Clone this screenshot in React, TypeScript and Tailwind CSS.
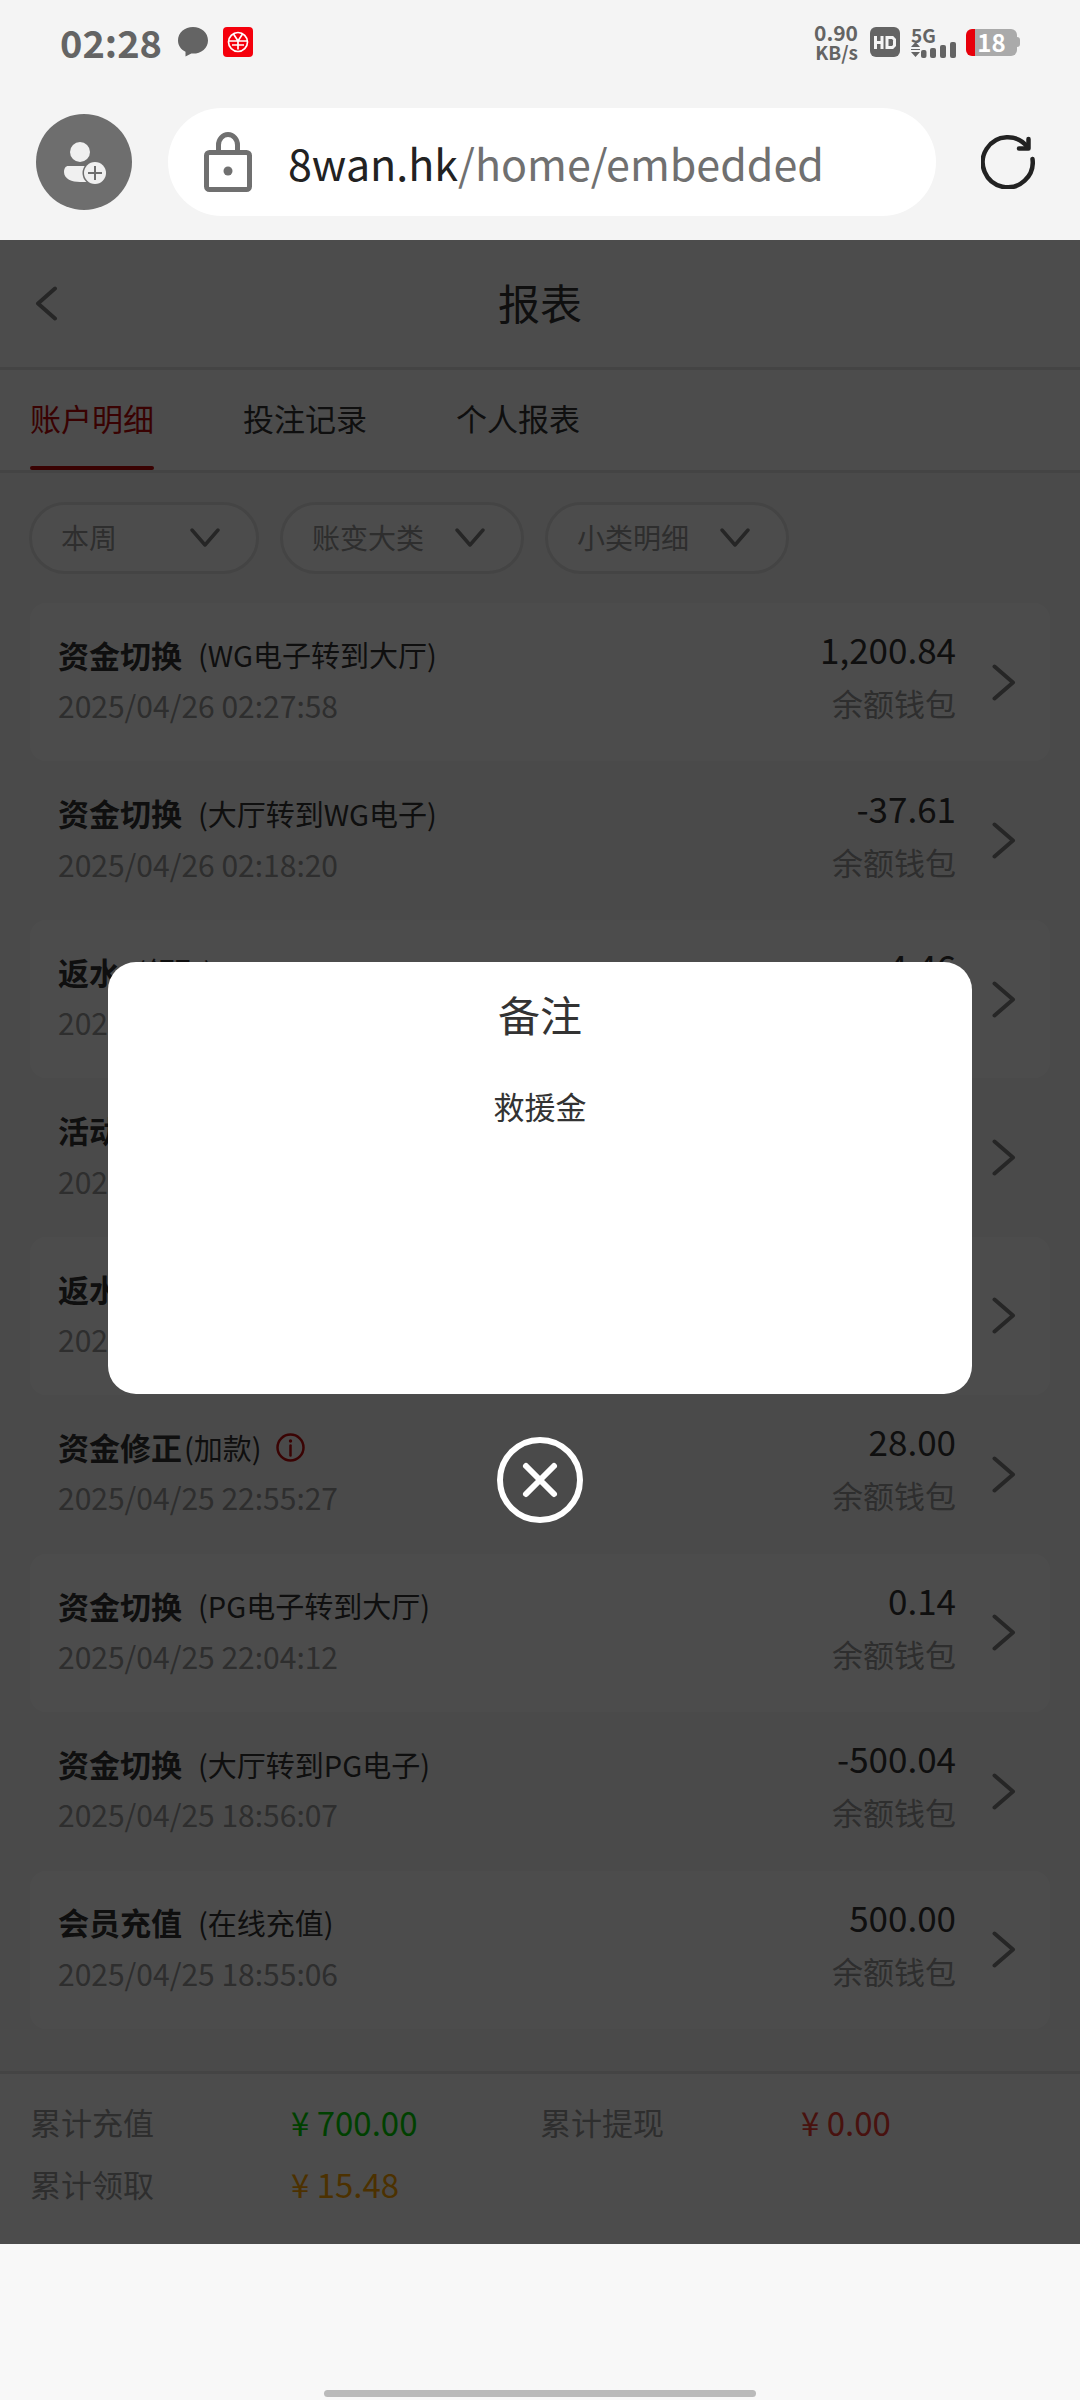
import React, { useState } from 'react';

interface LedgerRow {
  title: string;
  note: string;
  time: string;
  amount: string;
  tight?: boolean;
  info?: boolean;
}

const rows: LedgerRow[] = [
  { title: '资金切换', note: '(WG电子转到大厅)', time: '2025/04/26 02:27:58', amount: '1,200.84' },
  { title: '资金切换', note: '(大厅转到WG电子)', time: '2025/04/26 02:18:20', amount: '-37.61' },
  { title: '返水', note: '(领取)', time: '2025/04/26 02:17:46', amount: '4.46' },
  { title: '活动', note: '(领取)', time: '2025/04/26 02:17:40', amount: '8.00' },
  { title: '返水', note: '(领取)', time: '2025/04/25 23:02:11', amount: '3.02' },
  { title: '资金修正', note: '(加款)', time: '2025/04/25 22:55:27', amount: '28.00', tight: true, info: true },
  { title: '资金切换', note: '(PG电子转到大厅)', time: '2025/04/25 22:04:12', amount: '0.14' },
  { title: '资金切换', note: '(大厅转到PG电子)', time: '2025/04/25 18:56:07', amount: '-500.04' },
  { title: '会员充值', note: '(在线充值)', time: '2025/04/25 18:55:06', amount: '500.00' },
];

const tabs = ['账户明细', '投注记录', '个人报表'];

const filters = [
  { id: 'range', label: '时间', value: '本周', width: 'w-[230px]' },
  { id: 'group', label: '大类', value: '账变大类', width: 'w-[244px]' },
  { id: 'detail', label: '小类', value: '小类明细', width: 'w-[244px]' },
];

const totals = [
  { label: '累计充值', value: '¥ 700.00', color: 'text-[#00d800]' },
  { label: '累计提现', value: '¥ 0.00', color: 'text-[#f03c32]' },
  { label: '累计领取', value: '¥ 15.48', color: 'text-[#ffa500]' },
];

const StatusBar: React.FC = () => (
  <div className="flex h-21 items-center justify-between pr-15 pl-15 text-[#646464]">
    <div className="flex items-center">
      <span className="text-[38px] leading-none font-semibold">02:28</span>
      <svg className="ml-4 h-[30px] w-[30px]" viewBox="0 0 30 30" fill="currentColor">
        <path d="M15 0C6.7 0 0 5.8 0 13.4c0 4.900 2.700 8.800 7.500 11.300L7.500 29.500l5.800-3c.6.1 1.100.1 1.700.1 8.300 0 15-5.600 15-13.200S23.300 0 15 0z" />
      </svg>
      <svg className="ml-[15px] h-[30px] w-[30px]" viewBox="0 0 30 30" fill="none" stroke="#fff" strokeWidth="1.700">
        <rect width="30" height="30" rx="4" fill="#f5000c" stroke="none" />
        <circle cx="15" cy="15" r="9.500" />
        <path d="M10.500 7l4.500 7 4.500-7M5.500 14h19M9 18h12M15 14v8.500" />
      </svg>
    </div>
    <div className="flex items-center">
      <div className="flex flex-col items-end font-semibold">
        <span className="text-[21px] leading-5">0.90</span>
        <span className="text-[19px] leading-5">KB/s</span>
      </div>
      <svg className="ml-3 h-[30px] w-[30px]" viewBox="0 0 30 30" fill="none">
        <rect width="30" height="30" rx="6" fill="currentColor" />
        <path d="M5.500 9v13M12 9v13M5.500 15.500H12M17 10.500h5.500l2 2v6l-2 2H17z" stroke="#f5f5f5" strokeWidth="3" />
      </svg>
      <div className="ml-[11px] flex flex-col">
        <span className="text-[19px] leading-[15px] font-bold">5G</span>
        <svg className="h-[16px] w-[45px]" viewBox="0 0 45 16" fill="currentColor">
          <path d="M4.500 0L9 5H0zM4.500 15L0 10h9zM0 7h9v1H0z" />
          <rect x="10" y="8" width="5.500" height="8" rx="2" />
          <rect x="19" y="6" width="6" height="10" rx="2" />
          <rect x="29" y="3" width="6" height="13" rx="2" />
          <rect x="39" y="0" width="6" height="16" rx="2" />
        </svg>
      </div>
      <div className="ml-[10px] flex items-center">
        <div className="flex h-[27px] w-[51px] items-center justify-center rounded-md bg-gradient-to-r from-red-600 from-18% to-[#aaaaaa] to-18% text-[24px] leading-none font-bold text-white">
          18
        </div>
        <div className="h-[10px] w-[3px] rounded-r-sm bg-[#aaaaaa]" />
      </div>
    </div>
  </div>
);

const AddressBar: React.FC = () => (
  <div className="flex items-center pt-6 pr-[45px] pb-6 pl-9">
    <button type="button" aria-label="账号" className="flex h-24 w-24 items-center justify-center rounded-full bg-[#6e6e6e]">
      <svg className="h-24 w-24" viewBox="0 0 96 96" fill="#f0f0f0">
        <circle cx="44" cy="38" r="10" />
        <path d="M32 52h24v16H44c-8 0-16-3-16-10 0-4 2-6 4-6z" />
        <circle cx="59" cy="59" r="12.500" fill="#6e6e6e" />
        <circle cx="59" cy="59" r="11" />
        <path d="M59 52v14M52 59h14" stroke="#6e6e6e" strokeWidth="2" />
      </svg>
    </button>
    <div className="ml-9 flex h-27 flex-1 items-center rounded-full bg-white pl-9">
      <svg className="h-[60px] w-12" viewBox="0 0 48 60" fill="none" stroke="#707070" strokeWidth="5">
        <rect x="2.500" y="20.500" width="43" height="37" rx="3" />
        <path d="M14.500 20V13a9.500 10.500 0 0 1 19 0v7" />
        <circle cx="24" cy="39" r="4.500" fill="#707070" stroke="none" />
      </svg>
      <a href="#embedded" className="ml-9 text-[43px] leading-none text-[#707070]">
        <span className="text-[#222222]">8wan.hk</span>/home/embedded
      </a>
    </div>
    <button type="button" aria-label="刷新" className="ml-[45px]">
      <svg className="h-[54px] w-[54px]" viewBox="0 0 54 54" fill="none" stroke="#222222" strokeWidth="4.500" strokeLinecap="round" strokeLinejoin="round">
        <path d="M51.500 24a25 25 0 1 1-5-12" />
        <path d="M47.500 4v9.500H38" />
      </svg>
    </button>
  </div>
);

const Row: React.FC<{ row: LedgerRow }> = ({ row }) => (
  <li className="flex flex-1 items-center rounded-2xl pr-[34px] pl-7 text-[#333333] odd:bg-white">
    <div className="flex-1 pb-1">
      <div className="flex h-[50px] items-center">
        <span className="text-[31px] font-bold">{row.title}</span>
        <span className={row.tight ? 'ml-[2px] text-[29px]' : 'ml-4 text-[29px]'}>{row.note}</span>
        {row.info && (
          <svg className="ml-[14px] h-[29px] w-[29px]" viewBox="0 0 29 29" fill="none" stroke="#c20c0c" strokeWidth="2.500">
            <circle cx="14.500" cy="14.500" r="13" />
            <path d="M14.500 12.500v10" strokeLinecap="round" />
            <circle cx="14.500" cy="8" r="1.700" fill="#c20c0c" stroke="none" />
          </svg>
        )}
      </div>
      <div className="text-[30px] leading-[50px] text-[#999999]">{row.time}</div>
    </div>
    <div className="pb-3 text-right">
      <div className="text-[35px] leading-[54px]">{row.amount}</div>
      <div className="text-[31px] leading-[54px] text-[#999999]">余额钱包</div>
    </div>
    <svg className="ml-9 h-[37px] w-6" viewBox="0 0 24 37" fill="none" stroke="#808080" strokeWidth="4" strokeLinecap="round" strokeLinejoin="round">
      <path d="M2.500 2.500L21 18.500 2.500 34.500" />
    </svg>
  </li>
);

export default function App() {
  const [activeTab, setActiveTab] = useState<string>(tabs[0]);
  const [open, setOpen] = useState<boolean>(true);

  return (
    <div className="flex min-h-screen flex-col bg-[#f8f8f8] font-['Noto_Sans_CJK_SC',sans-serif]">
      <header className="bg-[#f4f4f4]">
        <StatusBar />
        <AddressBar />
      </header>

      <div className="relative flex flex-1 flex-col">
        <div className="flex h-[130px] items-center border-b-3 border-[#e3e3e3] bg-white px-[35px]">
          <button type="button" aria-label="返回" className="w-6">
            <svg className="h-[35px] w-[23px]" viewBox="0 0 23 35" fill="none" stroke="#808080" strokeWidth="4" strokeLinecap="round" strokeLinejoin="round">
              <path d="M20 2.500L3 17.500 20 32.500" />
            </svg>
          </button>
          <h1 className="flex-1 pb-1 text-center text-[42px] leading-none text-[#333333]">报表</h1>
          <div className="w-6" />
        </div>

        <nav className="flex h-[103px] gap-[89px] border-b-3 border-[#e3e3e3] bg-white px-[30px]">
          {tabs.map((tab) => (
            <button
              key={tab}
              type="button"
              onClick={() => setActiveTab(tab)}
              className={`flex flex-col text-[31px] ${tab === activeTab ? 'text-[#c00808]' : 'text-[#333333]'}`}
            >
              <span className="flex flex-1 items-center">{tab}</span>
              <span className={`h-1 w-full rounded-full ${tab === activeTab ? 'bg-[#c00808]' : ''}`} />
            </button>
          ))}
        </nav>

        <div className="flex gap-[21px] px-[29px] pt-[29px] pb-[29px]">
          {filters.map((f) => (
            <div key={f.id} className={`relative ${f.width}`}>
              <select
                id={f.id}
                aria-label={f.label}
                className="h-18 w-full appearance-none rounded-full border-3 border-[#e3e3e3] bg-white pb-[2px] pl-[29px] text-[28px] text-[#999999]"
              >
                <option>{f.value}</option>
              </select>
              <svg className="pointer-events-none absolute top-[26px] right-[39px] h-5 w-[30px]" viewBox="0 0 30 20" fill="none" stroke="#808080" strokeWidth="3.500" strokeLinecap="round" strokeLinejoin="round">
                <path d="M2 2l13 15L28 2" />
              </svg>
            </div>
          ))}
        </div>

        <ul className="flex flex-1 flex-col px-[30px] pb-[42px]">
          {rows.map((row) => (
            <Row key={row.time} row={row} />
          ))}
        </ul>

        <div className="grid grid-cols-2 border-t-3 border-[#e3e3e3] bg-white px-[30px] pt-[17px] pb-[29px]">
          {totals.map((t) => (
            <div key={t.label} className="grid grid-cols-2 leading-[62px]">
              <span className="text-[31px] text-[#999999]">{t.label}</span>
              <span className={`pl-[6px] text-[33px] ${t.color}`}>{t.value}</span>
            </div>
          ))}
        </div>

        {open && (
          <div className="absolute inset-0 flex flex-col items-center justify-center bg-black/70">
            <div role="dialog" aria-label="备注" className="flex aspect-[2/1] w-4/5 flex-col items-center rounded-[28px] bg-white text-[#333333]">
              <h2 className="pt-5 text-[42px] leading-[64px]">备注</h2>
              <p className="pt-9 text-[31px] leading-[48px]">救援金</p>
            </div>
            <button type="button" aria-label="关闭" onClick={() => setOpen(false)} className="mt-[43px]">
              <svg className="h-[86px] w-[86px]" viewBox="0 0 86 86" fill="none" stroke="#fff" strokeWidth="6" strokeLinecap="round">
                <circle cx="43" cy="43" r="40" />
                <path d="M29 29l28 28M57 29L29 57" />
              </svg>
            </button>
          </div>
        )}
      </div>

      <div className="flex h-39 items-end justify-center pb-[3px]">
        <div className="h-[7px] w-2/5 rounded-full bg-[#bababa]" />
      </div>
    </div>
  );
}
